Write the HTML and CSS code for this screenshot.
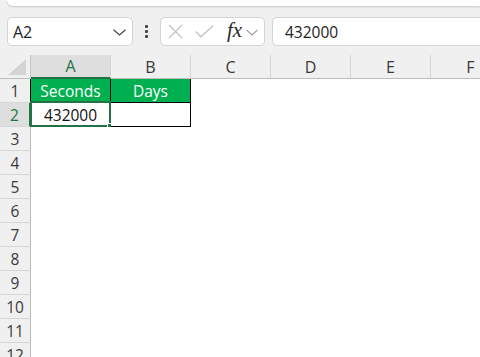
FILE: index.html
```html
<!DOCTYPE html>
<html>
<head>
<meta charset="utf-8">
<link rel="stylesheet" href="styles.css">
</head>
<body>
<div class="topbar"></div>
<div class="toolbar">
  <div class="namebox">
    <span class="nameval">A2</span>
    <svg class="chev" width="13" height="7" viewBox="0 0 13 7"><polyline points="0.5,0.8 6.5,6 12.5,0.8" fill="none" stroke="#444" stroke-width="1.2"/></svg>
  </div>
  <div class="dots"><span></span><span></span><span></span></div>
  <div class="fxbox">
    <svg class="ico" width="15" height="15" viewBox="0 0 15 15"><path d="M1 1 L14 14 M14 1 L1 14" stroke="#c2c2c2" stroke-width="1.3" fill="none"/></svg>
    <svg class="ico" width="19" height="13" viewBox="0 0 19 13"><polyline points="0.8,6.5 5.8,11.8 18.2,0.8" stroke="#c2c2c2" stroke-width="1.3" fill="none"/></svg>
    <span class="fx">fx</span>
    <svg class="ico small" width="12" height="7" viewBox="0 0 12 7"><polyline points="0.5,0.8 6,6 11.5,0.8" fill="none" stroke="#999" stroke-width="1.1"/></svg>
  </div>
  <div class="formula">432000</div>
</div>
<div class="sheet">
  <div class="corner"><svg width="18" height="16" viewBox="0 0 18 16"><polygon points="18,0 18,16 0,16" fill="#d4d4d4"/></svg></div>
  <div class="ch sel">A</div>
  <div class="ch">B</div>
  <div class="ch">C</div>
  <div class="ch">D</div>
  <div class="ch">E</div>
  <div class="ch">F</div>

  <div class="rh">1</div>
  <div class="c hdr first">Seconds</div>
  <div class="c hdr">Days</div>
  <div class="c"></div><div class="c"></div><div class="c"></div><div class="c"></div>

  <div class="rh sel">2</div>
  <div class="c data first active">432000<span class="selbox"></span><span class="handle"></span></div>
  <div class="c data"></div>
  <div class="c"></div><div class="c"></div><div class="c"></div><div class="c"></div>

  <div class="rh">3</div><div class="c"></div><div class="c"></div><div class="c"></div><div class="c"></div><div class="c"></div><div class="c"></div>
  <div class="rh">4</div><div class="c"></div><div class="c"></div><div class="c"></div><div class="c"></div><div class="c"></div><div class="c"></div>
  <div class="rh">5</div><div class="c"></div><div class="c"></div><div class="c"></div><div class="c"></div><div class="c"></div><div class="c"></div>
  <div class="rh">6</div><div class="c"></div><div class="c"></div><div class="c"></div><div class="c"></div><div class="c"></div><div class="c"></div>
  <div class="rh">7</div><div class="c"></div><div class="c"></div><div class="c"></div><div class="c"></div><div class="c"></div><div class="c"></div>
  <div class="rh">8</div><div class="c"></div><div class="c"></div><div class="c"></div><div class="c"></div><div class="c"></div><div class="c"></div>
  <div class="rh">9</div><div class="c"></div><div class="c"></div><div class="c"></div><div class="c"></div><div class="c"></div><div class="c"></div>
  <div class="rh">10</div><div class="c"></div><div class="c"></div><div class="c"></div><div class="c"></div><div class="c"></div><div class="c"></div>
  <div class="rh">11</div><div class="c"></div><div class="c"></div><div class="c"></div><div class="c"></div><div class="c"></div><div class="c"></div>
  <div class="rh">12</div><div class="c"></div><div class="c"></div><div class="c"></div><div class="c"></div><div class="c"></div><div class="c"></div>
</div>
</body>
</html>
```

FILE: styles.css
```css
* { box-sizing: border-box; }
html, body { margin: 0; padding: 0; }
body {
  width: 480px;
  height: 357px;
  overflow: hidden;
  background: #f0f0f0;
  font-family: "Open Sans", "Noto Sans", sans-serif;
  color: #222;
}
.topbar {
  height: 6px;
  margin-left: 7px;
  background: #fff;
  border-bottom-left-radius: 6px;
  box-shadow: 0 1px 2px rgba(0,0,0,0.18);
}
.toolbar {
  display: flex;
  align-items: center;
  height: 29px;
  margin-top: 11px;
  padding-left: 7px;
}
.namebox {
  width: 126px;
  height: 29px;
  background: #fff;
  border: 1px solid #d4d4d4;
  border-radius: 5px;
  display: flex;
  align-items: center;
  justify-content: space-between;
  padding: 0 6px 0 5px;
}
.nameval { font-size: 16px; color: #222; }
.chev { margin-top: 2px; }
.dots {
  width: 27px;
  display: flex;
  flex-direction: column;
  align-items: center;
  gap: 2px;
}
.dots span {
  width: 3px;
  height: 3px;
  background: #444;
  border-radius: 1px;
}
.fxbox {
  width: 105px;
  height: 29px;
  background: #fff;
  border: 1px solid #d4d4d4;
  border-radius: 5px;
  display: flex;
  align-items: center;
  padding-left: 7px;
}
.fxbox .ico { display: block; }
.fxbox .ico:nth-child(2) { margin-left: 12px; }
.fx {
  font-family: "Liberation Serif", "DejaVu Serif", serif;
  font-style: italic;
  font-size: 21px;
  color: #2a2a2a;
  margin-left: 13px;
  line-height: 1;
  margin-top: -2px;
}
.fxbox .small { margin-left: 4px; margin-top: 2px; }
.formula {
  flex: 1;
  margin-left: 7px;
  height: 29px;
  background: #fff;
  border: 1px solid #d4d4d4;
  border-right: none;
  border-radius: 5px 0 0 5px;
  display: flex;
  align-items: center;
  padding-left: 12px;
  font-size: 15.5px;
  color: #222;
}
.sheet {
  margin-top: 9px;
  display: grid;
  grid-template-columns: 31px repeat(6, 80px);
  grid-template-rows: 24px repeat(12, 24px);
  background: #fff;
}
.corner {
  background: #f0f0f0;
  border-right: 1px solid #c6c6c6;
  border-bottom: 1px solid #bdbdbd;
  display: flex;
  align-items: flex-end;
  justify-content: flex-end;
  padding: 0 4px 3px 0;
}
.corner svg { display: block; }
.ch {
  background: #f0f0f0;
  border-right: 1px solid #d6d6d6;
  border-bottom: 1px solid #bdbdbd;
  display: flex;
  align-items: center;
  justify-content: center;
  font-size: 16px;
  color: #3a3a3a;
}
.ch.sel {
  background: #dedede;
  color: #217346;
  border-bottom: 2px solid #217346;
}
.rh {
  background: #f0f0f0;
  border-right: 1px solid #bdbdbd;
  border-bottom: 1px solid #d6d6d6;
  display: flex;
  align-items: center;
  justify-content: center;
  font-size: 15.5px;
  color: #3a3a3a;
}
.rh.sel {
  background: #dedede;
  color: #217346;
  border-right: 2px solid #217346;
}
.c {
  background: #fff;
  display: flex;
  align-items: center;
  justify-content: center;
  font-size: 15.5px;
  position: relative;
}
.c.hdr {
  background: #00b050;
  color: #fff;
  border-right: 1px solid #000;
  border-bottom: 1px solid #000;
}
.c.data {
  border-right: 1px solid #000;
  border-bottom: 1px solid #000;
  color: #111;
}
.c.first { border-left: 1px solid #000; margin-left: -1px; }
.selbox {
  position: absolute;
  left: -1px;
  top: -2px;
  right: -1px;
  bottom: -1px;
  border: 2px solid #217346;
}
.handle {
  position: absolute;
  right: -4px;
  bottom: -4px;
  width: 7px;
  height: 7px;
  background: #217346;
  border: 1px solid #fff;
}
```
